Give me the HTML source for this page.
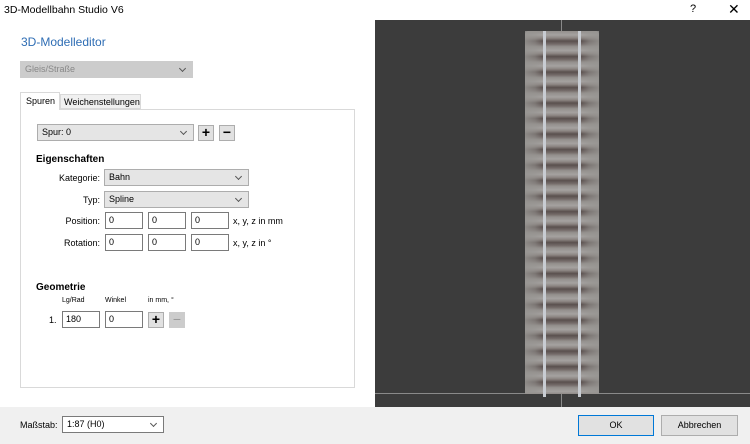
<!DOCTYPE html>
<html><head><style>
*{box-sizing:border-box}
body{margin:0;width:750px;height:444px;background:#fff;font-family:"Liberation Sans",sans-serif;font-size:9px;color:#000;position:relative;overflow:hidden}
.a{position:absolute}
.sel{position:absolute;background:#e5e5e5;border:1px solid #adadad;height:17px;padding:2px 4px;font-size:9px}
.sel:after{content:"";position:absolute;right:7px;top:4px;width:4px;height:4px;border-right:1px solid #555;border-bottom:1px solid #555;transform:rotate(45deg)}
.in{position:absolute;background:#fff;border:1px solid #7a7a7a;height:17px;padding:2px 3px;font-size:9px}
.btn{position:absolute;width:16px;height:16px;background:#e1e1e1;border:1px solid #adadad;font-size:14px;font-weight:bold;text-align:center;line-height:13px}
.lbl{position:absolute;text-align:right;font-size:9px}
</style></head><body>
<div class="a" style="left:0;top:0;width:750px;height:20px;background:#fff"></div>
<div class="a" style="left:4px;top:4px;font-size:10.5px">3D-Modellbahn Studio V6</div>
<div class="a" style="left:690px;top:3px;font-size:11px">?</div>
<div class="a" style="left:728px;top:1px;font-size:14px;font-weight:300">✕</div>
<div class="a" style="left:21px;top:35px;font-size:12px;color:#2e6db4">3D-Modelleditor</div>
<div class="sel" style="left:20px;top:61px;width:173px;background:#ccc;border-color:#ccc;color:#888"><span>Gleis/Straße</span></div>
<div class="a" style="left:20px;top:109px;width:335px;height:279px;border:1px solid #d9d9d9;background:#fff"></div>
<div class="a" style="left:20px;top:92px;width:40px;height:18px;border:1px solid #d9d9d9;border-bottom:none;background:#fff;padding:3px 5px">Spuren</div>
<div class="a" style="left:60px;top:94px;width:81px;height:15px;border:1px solid #d9d9d9;background:#f0f0f0;padding:2px 3px">Weichenstellungen</div>
<div class="sel" style="left:37px;top:124px;width:157px">Spur: 0</div>
<div class="btn" style="left:198px;top:125px">+</div>
<div class="btn" style="left:219px;top:125px">−</div>
<div class="a" style="left:36px;top:154px;font-weight:bold;font-size:10px">Eigenschaften</div>
<div class="lbl" style="left:40px;top:173px;width:60px">Kategorie:</div>
<div class="sel" style="left:104px;top:169px;width:145px">Bahn</div>
<div class="lbl" style="left:40px;top:195px;width:60px">Typ:</div>
<div class="sel" style="left:104px;top:191px;width:145px">Spline</div>
<div class="lbl" style="left:40px;top:216px;width:60px">Position:</div>
<div class="in" style="left:105px;top:212px;width:38px">0</div>
<div class="in" style="left:148px;top:212px;width:38px">0</div>
<div class="in" style="left:191px;top:212px;width:38px">0</div>
<div class="a" style="left:233px;top:216px">x, y, z in mm</div>
<div class="lbl" style="left:40px;top:238px;width:60px">Rotation:</div>
<div class="in" style="left:105px;top:234px;width:38px">0</div>
<div class="in" style="left:148px;top:234px;width:38px">0</div>
<div class="in" style="left:191px;top:234px;width:38px">0</div>
<div class="a" style="left:233px;top:238px">x, y, z in °</div>
<div class="a" style="left:36px;top:282px;font-weight:bold;font-size:10px">Geometrie</div>
<div class="a" style="left:62px;top:297px;font-size:7px">Lg/Rad</div>
<div class="a" style="left:105px;top:297px;font-size:7px">Winkel</div>
<div class="a" style="left:148px;top:297px;font-size:7px">in mm, °</div>
<div class="a" style="left:49px;top:315px">1.</div>
<div class="in" style="left:62px;top:311px;width:38px">180</div>
<div class="in" style="left:105px;top:311px;width:38px">0</div>
<div class="btn" style="left:148px;top:312px">+</div>
<div class="btn" style="left:169px;top:312px;background:#ccc;border-color:#ccc;color:#999;font-weight:normal">−</div>
<div class="a" style="left:375px;top:20px;width:375px;height:387px;background:#3c3c3c"></div>
<div class="a" style="left:375px;top:393px;width:375px;height:1px;background:#8a8a8a"></div>
<div class="a" style="left:561px;top:20px;width:1px;height:12px;background:#8a8a8a"></div>
<div class="a" style="left:561px;top:394px;width:1px;height:13px;background:#8a8a8a"></div>
<div class="a" style="left:525px;top:31px;width:74px;height:363px;border-radius:3px 3px 0 0;background:repeating-linear-gradient(180deg,#938f8c 0px,#a5a2a0 4px,#8c8582 7px,#5a504e 10px,#736a68 13px,#938f8c 15.5px)"></div>
<div class="a" style="left:525px;top:31px;width:74px;height:363px;background:linear-gradient(90deg,rgba(150,148,145,.85) 0,rgba(150,148,145,.55) 10px,rgba(0,0,0,0) 18px,rgba(0,0,0,0) 56px,rgba(150,148,145,.55) 64px,rgba(150,148,145,.85) 74px)"></div>
<div class="a" style="left:543px;top:31px;width:3px;height:366px;background:#c8ccd2"></div>
<div class="a" style="left:578px;top:31px;width:3px;height:366px;background:#c8ccd2"></div>
<div class="a" style="left:0;top:407px;width:750px;height:37px;background:#f0f0f0"></div>
<div class="a" style="left:20px;top:420px">Maßstab:</div>
<div class="sel" style="left:62px;top:416px;width:102px;background:#fff;border-color:#7a7a7a">1:87 (H0)</div>
<div class="a" style="left:578px;top:415px;width:76px;height:21px;background:#e1e1e1;border:1px solid #0078d7;text-align:center;line-height:19px">OK</div>
<div class="a" style="left:661px;top:415px;width:77px;height:21px;background:#e1e1e1;border:1px solid #adadad;text-align:center;line-height:19px">Abbrechen</div>
</body></html>
